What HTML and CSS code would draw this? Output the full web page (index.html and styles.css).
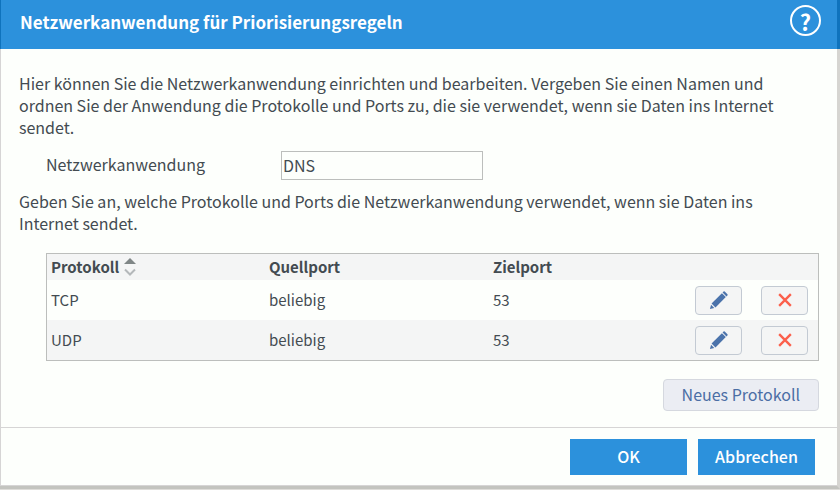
FILE: index.html
```html
<!DOCTYPE html>
<html lang="de">
  <head>
    <meta charset="UTF-8" />
    <meta name="viewport" content="width=device-width, initial-scale=1.0" />
    <title>Netzwerkanwendung für Priorisierungsregeln</title>
    <link rel="stylesheet" href="styles.css">
  </head>
  <body>
    <svg class="sprite" aria-hidden="true">
      <symbol id="icon-edit" viewBox="0 0 20 20">
        <path d="M1 19l1.200-4.600 3.400 3.400z" />
        <path d="M2.700 13.200L13.600 2.300l4.100 4.100L6.800 17.300z" />
        <path d="M14.300 1.600l1-1q.6-.5 1.200 0l2.900 2.900q.5.600 0 1.200l-1 1z" />
      </symbol>
      <symbol id="icon-delete" viewBox="0 0 12 12">
        <path d="M1 1l10 10M11 1L1 11" />
      </symbol>
    </svg>

    <div class="dialog">
      <header class="dialog-header">
        <h1>Netzwerkanwendung für Priorisierungsregeln</h1>
        <button class="help" type="button" aria-label="Hilfe">?</button>
      </header>

      <form class="dialog-form">
        <main class="content">
          <p>Hier können Sie die Netzwerkanwendung einrichten und bearbeiten. Vergeben Sie einen Namen und ordnen Sie der Anwendung die Protokolle und Ports zu, die sie verwendet, wenn sie Daten ins Internet sendet.</p>

          <div class="field">
            <label for="app-name">Netzwerkanwendung</label>
            <input type="text" id="app-name" value="DNS">
          </div>

          <p>Geben Sie an, welche Protokolle und Ports die Netzwerkanwendung verwendet, wenn sie Daten ins Internet sendet.</p>

          <div class="protocols">
            <table>
              <thead>
                <tr>
                  <th class="col-protocol" scope="col" aria-sort="ascending">
                    <span class="sortable">
                      Protokoll
                      <svg class="sort" viewBox="0 0 12 18" aria-hidden="true">
                        <path class="sort-up" d="M0 6l6-6 6 6z" />
                        <path class="sort-down" d="M1 11.500l5 5 5-5" />
                      </svg>
                    </span>
                  </th>
                  <th class="col-source" scope="col">Quellport</th>
                  <th scope="col">Zielport</th>
                  <td></td>
                </tr>
              </thead>
              <tbody>
                <tr>
                  <td>TCP</td>
                  <td>beliebig</td>
                  <td>53</td>
                  <td>
                    <div class="actions">
                      <button type="button" aria-label="TCP bearbeiten"><svg class="edit"><use href="#icon-edit" /></svg></button>
                      <button type="button" aria-label="TCP löschen"><svg class="delete"><use href="#icon-delete" /></svg></button>
                    </div>
                  </td>
                </tr>
                <tr>
                  <td>UDP</td>
                  <td>beliebig</td>
                  <td>53</td>
                  <td>
                    <div class="actions">
                      <button type="button" aria-label="UDP bearbeiten"><svg class="edit"><use href="#icon-edit" /></svg></button>
                      <button type="button" aria-label="UDP löschen"><svg class="delete"><use href="#icon-delete" /></svg></button>
                    </div>
                  </td>
                </tr>
              </tbody>
            </table>
            <button class="add" type="button">Neues Protokoll</button>
          </div>
        </main>

        <footer class="dialog-footer">
          <button type="button">OK</button>
          <button type="button">Abbrechen</button>
        </footer>
      </form>
    </div>
  </body>
</html>
```
FILE: styles.css
```css
* {
  box-sizing: border-box;
}

body {
  margin: 0;
  background: #deddd9;
  color: #434b51;
  font-family: "Noto Sans CJK SC", "Open Sans", sans-serif;
  font-size: 16px;
  line-height: 22px;
}

button,
input {
  font: inherit;
  color: inherit;
}

button {
  cursor: pointer;
}

.sprite {
  display: none;
}

.dialog {
  background: #fdfffc;
  border-right: 3px solid #d6d5d1;
  border-bottom: 3px solid #c3c4bf;
}

.dialog-header {
  display: flex;
  align-items: center;
  justify-content: space-between;
  padding: 5px 16px 13px 19px;
  background: #2c91dc;
  border-left: 1px solid #0f73bd;
  box-shadow: 3px 0 0 #0f73bd;
  color: #fff;
}

.dialog-header h1 {
  margin: 0;
  padding-top: 2px;
  font-size: 17px;
  font-weight: 700;
}

.help {
  width: 31px;
  height: 31px;
  padding: 0;
  border: 2px solid #fff;
  border-radius: 50%;
  background: none;
  font-size: 22px;
  font-weight: 700;
  line-height: 24px;
}

.dialog-form {
  border-left: 1px solid #d6d5d5;
}

.content {
  padding: 23px 18px 16px;
}

.content p {
  margin: 0;
  padding-right: 18px;
}

.field {
  display: flex;
  margin: 13px 0 10px 27px;
}

.field label {
  width: 235px;
  line-height: 26px;
}

.field input {
  width: 202px;
  height: 29px;
  padding: 0 1px 2px;
  border: 1px solid #bcbebc;
  border-radius: 0;
  background: #fdfffc;
}

.protocols {
  display: flex;
  flex-direction: column;
  align-items: flex-end;
  gap: 18px;
  margin: 19px 0 0 27px;
}

table {
  width: 100%;
  border: 1px solid #bcbebc;
  border-spacing: 0;
  font-size: 15px;
  table-layout: fixed;
}

th,
td {
  padding: 0 10px 0 4px;
  text-align: left;
}

thead {
  background: #f4f5f5;
}

thead tr {
  height: 26px;
}

th {
  font-weight: 700;
}

tbody tr {
  height: 40px;
}

tbody tr:nth-child(even) {
  background: #f4f5f5;
}

.col-protocol {
  width: 218px;
}

.col-source {
  width: 224px;
}

.sortable {
  display: flex;
  align-items: center;
  gap: 5px;
}

.sort {
  width: 12px;
  height: 18px;
}

.sort-up {
  fill: #7f8686;
}

.sort-down {
  fill: none;
  stroke: #b4b8ba;
  stroke-width: 2;
}

.actions {
  display: flex;
  justify-content: flex-end;
  gap: 19px;
}

.actions button {
  display: flex;
  align-items: center;
  justify-content: center;
  width: 47px;
  height: 29px;
  padding: 0;
  border: 1px solid #c3cad3;
  border-radius: 4px;
  background: #f4f5f5;
}

.edit {
  width: 19px;
  height: 19px;
  fill: #4b73ab;
}

.delete {
  width: 14px;
  height: 14px;
  stroke: #fb5f4b;
  stroke-width: 2;
}

.add {
  height: 32px;
  padding: 0 18px 2px;
  border: 1px solid #d5d8df;
  border-radius: 4px;
  background: #ebedf3;
  color: #4b6ea5;
}

.dialog-footer {
  display: flex;
  justify-content: flex-end;
  gap: 11px;
  padding: 11px 22px 10px;
  border-top: 1px solid #d6d5d5;
  border-bottom: 1px solid #d6d5d5;
}

.dialog-footer button {
  width: 117px;
  height: 36px;
  padding: 0 0 2px;
  border: none;
  background: #2c91dc;
  color: #fff;
  font-weight: 500;
}
```
